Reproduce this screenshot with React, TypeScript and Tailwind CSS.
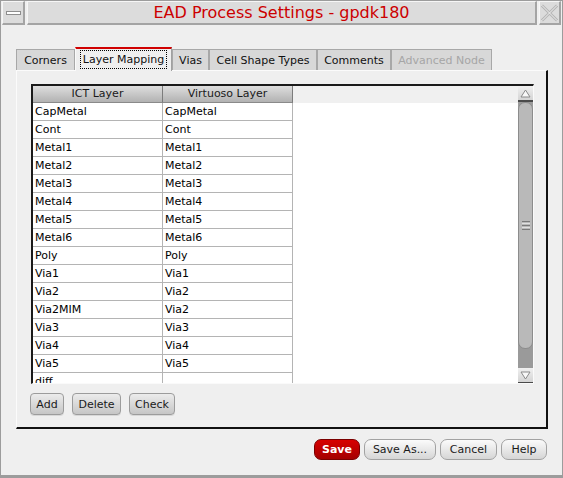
import React from 'react';

// Layer rows: ICT name -> Virtuoso name
const ROWS: [string, string][] = [
  ['CapMetal', 'CapMetal'],
  ['Cont', 'Cont'],
  ['Metal1', 'Metal1'],
  ['Metal2', 'Metal2'],
  ['Metal3', 'Metal3'],
  ['Metal4', 'Metal4'],
  ['Metal5', 'Metal5'],
  ['Metal6', 'Metal6'],
  ['Poly', 'Poly'],
  ['Via1', 'Via1'],
  ['Via2', 'Via2'],
  ['Via2MIM', 'Via2'],
  ['Via3', 'Via3'],
  ['Via4', 'Via4'],
  ['Via5', 'Via5'],
  ['diff', ''],
];

interface TabItem {
  label: string;
  width: string;
  active?: boolean;
  disabled?: boolean;
}

const TABS: TabItem[] = [
  { label: 'Corners', width: 'w-[59px]' },
  { label: 'Layer Mapping', width: 'w-[97px]', active: true },
  { label: 'Vias', width: 'w-[37px]' },
  { label: 'Cell Shape Types', width: 'w-[108px]' },
  { label: 'Comments', width: 'w-[74px]' },
  { label: 'Advanced Node', width: 'w-[101px]', disabled: true },
];

const TitleBox: React.FC<{ children?: React.ReactNode; className?: string }> = ({ children, className }) => (
  <div
    className={`h-[24px] bg-[#dcdcdc] border-t border-l border-t-[#f6f6f6] border-l-[#f6f6f6] border-b-2 border-r-2 border-b-[#a4a4a4] border-r-[#a4a4a4] flex items-center justify-center ${className ?? ''}`}
  >
    {children}
  </div>
);

const Tab: React.FC<{ tab: TabItem }> = ({ tab }) => {
  if (tab.active) {
    return (
      <div
        className={`${tab.width} h-[24px] -mb-[1px] relative z-10 bg-[#efefef] border-t-2 border-t-[#d00000] border-l border-l-[#fafafa] border-r border-r-[#a0a0a0] flex items-start justify-center pt-[1px]`}
      >
        <span className="border border-dotted border-black px-[2px] h-[19px] leading-[17px] text-[#111]">
          {tab.label}
        </span>
      </div>
    );
  }
  return (
    <div
      className={`${tab.width} h-[21px] bg-[#d8d8d8] border-t border-l border-r border-[#a8a8a8] flex items-center justify-center pt-[2px] ${
        tab.disabled ? 'text-[#a6a6a6]' : 'text-[#111]'
      }`}
    >
      {tab.label}
    </div>
  );
};

const SmallButton: React.FC<{ label: string; width: string }> = ({ label, width }) => (
  <button
    className={`${width} h-[22px] rounded-[4px] border border-[#9c9c9c] bg-gradient-to-b from-[#ececec] to-[#c6c6c6] text-[#1a1a1a] text-[11px] leading-none shadow-[0_1px_0_#d8d8d8]`}
  >
    {label}
  </button>
);

const DialogButton: React.FC<{ label: string; width: string; primary?: boolean }> = ({ label, width, primary }) => (
  <button
    className={`${width} h-[21px] rounded-[7px] border text-[11px] leading-none ${
      primary
        ? 'border-[#7a0000] bg-gradient-to-b from-[#d80000] to-[#a40000] text-white font-bold'
        : 'border-[#a2a2a2] bg-gradient-to-b from-[#fbfbfb] to-[#d6d6d6] text-[#1a1a1a]'
    }`}
  >
    {label}
  </button>
);

const Arrow: React.FC<{ up?: boolean }> = ({ up }) => (
  <svg width="11" height="9" viewBox="0 0 11 9">
    {up ? (
      <polygon points="5.5,1 10,8 1,8" fill="#f8f8f8" stroke="#8a8a8a" strokeWidth="1" />
    ) : (
      <polygon points="1,1 10,1 5.5,8" fill="#f8f8f8" stroke="#8a8a8a" strokeWidth="1" />
    )}
  </svg>
);

const Scrollbar: React.FC = () => (
  <div className="w-[15px] flex flex-col bg-[#9a9a9a]">
    <div className="h-[16px] bg-gradient-to-b from-[#f0f0f0] to-[#d4d4d4] border-b-2 border-b-[#4a4a4a] flex items-center justify-center">
      <Arrow up />
    </div>
    <div className="h-[247px] rounded-[7px] bg-[#b9b9b9] border border-[#8c8c8c] flex flex-col items-center justify-center gap-[1px]">
      <div className="w-[8px] h-[1px] bg-[#7a7a7a]" />
      <div className="w-[8px] h-[1px] bg-[#e0e0e0]" />
      <div className="w-[8px] h-[1px] bg-[#7a7a7a]" />
      <div className="w-[8px] h-[1px] bg-[#e0e0e0]" />
      <div className="w-[8px] h-[1px] bg-[#7a7a7a]" />
    </div>
    <div className="flex-1" />
    <div className="h-[15px] bg-gradient-to-b from-[#f0f0f0] to-[#d4d4d4] border-b border-b-[#4a4a4a] flex items-center justify-center">
      <Arrow />
    </div>
  </div>
);

const MappingTable: React.FC = () => (
  <div className="w-[503px] h-[300px] border-t-2 border-l-2 border-t-[#1a1a1a] border-l-[#1a1a1a] border-b border-r border-b-[#fafafa] border-r-[#fafafa] flex">
    <div className="flex-1 flex flex-col overflow-hidden bg-white">
      {/* header */}
      <div className="h-[17px] flex shrink-0 bg-[#f0f0f0]">
        <div className="w-[130px] h-full bg-gradient-to-b from-[#dedede] to-[#b2b2b2] border-r border-r-[#7c7c7c] border-b border-b-[#8a8a8a] flex items-center justify-center text-[#1a1a1a]">
          ICT Layer
        </div>
        <div className="w-[130px] h-full bg-gradient-to-b from-[#dedede] to-[#b2b2b2] border-r border-r-[#7c7c7c] border-b border-b-[#8a8a8a] flex items-center justify-center text-[#1a1a1a]">
          Virtuoso Layer
        </div>
      </div>
      {ROWS.map(([ict, virt]) => (
        <div key={ict} className="h-[18px] flex shrink-0">
          <div className="w-[130px] h-full border-r border-b border-[#b4b4b4] pl-[2px] leading-[17px] text-black">
            {ict}
          </div>
          <div className="w-[130px] h-full border-r border-b border-[#b4b4b4] pl-[2px] leading-[17px] text-black">
            {virt}
          </div>
        </div>
      ))}
    </div>
    <Scrollbar />
  </div>
);

const App: React.FC = () => {
  return (
    <div className="w-[563px] h-[478px] bg-[#efefef] border-t border-l border-r border-b-[3px] border-[#9c9c9c] flex flex-col font-['DejaVu_Sans',sans-serif] text-[11px] overflow-hidden">
      {/* Title bar */}
      <div className="flex gap-[2px] px-[1px]">
        <TitleBox className="w-[23px]">
          <div className="w-[15px] h-[4px] bg-white border border-[#8e8e8e] mt-[1px]" />
        </TitleBox>
        <TitleBox className="flex-1">
          <span className="text-[16px] text-[#cc0000] leading-none">EAD Process Settings - gpdk180</span>
        </TitleBox>
        <TitleBox className="w-[22px]">
          <svg width="20" height="20" viewBox="0 0 20 20">
            <path d="M2 2 L18 18 M18 2 L2 18" stroke="#b4b4b4" strokeWidth="3" />
            <path d="M2 2 L18 18 M18 2 L2 18" stroke="#f4f4f4" strokeWidth="1" />
          </svg>
        </TitleBox>
      </div>

      {/* Tabs + panel */}
      <div className="mt-[22px] pl-[15px] pr-[14px] flex flex-col">
        <div className="flex items-end h-[23px]">
          {TABS.map((t) => (
            <Tab key={t.label} tab={t} />
          ))}
        </div>
        <div className="h-[359px] bg-[#efefef] border-t border-l border-t-[#fbfbfb] border-l-[#fbfbfb] border-r-2 border-b-2 border-r-[#111] border-b-[#111] pl-[14px] pt-[13px] flex flex-col">
          <MappingTable />
          <div className="flex gap-[8px] mt-[9px] -ml-[1px]">
            <SmallButton label="Add" width="w-[34px]" />
            <SmallButton label="Delete" width="w-[49px]" />
            <SmallButton label="Check" width="w-[46px]" />
          </div>
        </div>
      </div>

      {/* Dialog buttons */}
      <div className="flex justify-end gap-[4px] mt-[10px] pr-[15px]">
        <DialogButton label="Save" width="w-[46px]" primary />
        <DialogButton label="Save As..." width="w-[72px]" />
        <DialogButton label="Cancel" width="w-[57px]" />
        <DialogButton label="Help" width="w-[46px]" />
      </div>
    </div>
  );
};

export default App;
